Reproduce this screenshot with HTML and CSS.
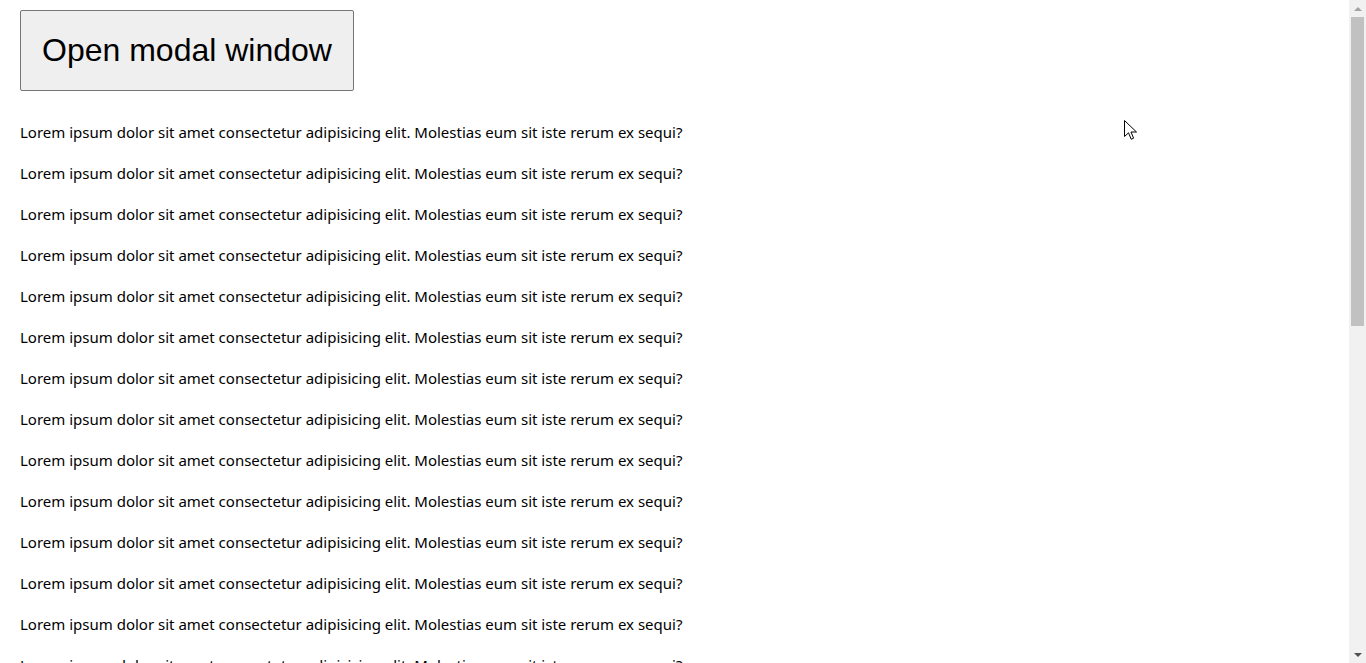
FILE: index.html
```html
<!DOCTYPE html>
<html lang="en">
<head>
<meta charset="utf-8">
<title>Modal window</title>
<link rel="stylesheet" href="styles.css">
</head>
<body>
<div class="viewport">
  <main class="page">
    <button class="btn-open" type="button">Open modal window</button>
    <p>Lorem ipsum dolor sit amet consectetur adipisicing elit. Molestias eum sit iste rerum ex sequi?</p>
    <p>Lorem ipsum dolor sit amet consectetur adipisicing elit. Molestias eum sit iste rerum ex sequi?</p>
    <p>Lorem ipsum dolor sit amet consectetur adipisicing elit. Molestias eum sit iste rerum ex sequi?</p>
    <p>Lorem ipsum dolor sit amet consectetur adipisicing elit. Molestias eum sit iste rerum ex sequi?</p>
    <p>Lorem ipsum dolor sit amet consectetur adipisicing elit. Molestias eum sit iste rerum ex sequi?</p>
    <p>Lorem ipsum dolor sit amet consectetur adipisicing elit. Molestias eum sit iste rerum ex sequi?</p>
    <p>Lorem ipsum dolor sit amet consectetur adipisicing elit. Molestias eum sit iste rerum ex sequi?</p>
    <p>Lorem ipsum dolor sit amet consectetur adipisicing elit. Molestias eum sit iste rerum ex sequi?</p>
    <p>Lorem ipsum dolor sit amet consectetur adipisicing elit. Molestias eum sit iste rerum ex sequi?</p>
    <p>Lorem ipsum dolor sit amet consectetur adipisicing elit. Molestias eum sit iste rerum ex sequi?</p>
    <p>Lorem ipsum dolor sit amet consectetur adipisicing elit. Molestias eum sit iste rerum ex sequi?</p>
    <p>Lorem ipsum dolor sit amet consectetur adipisicing elit. Molestias eum sit iste rerum ex sequi?</p>
    <p>Lorem ipsum dolor sit amet consectetur adipisicing elit. Molestias eum sit iste rerum ex sequi?</p>
    <p>Lorem ipsum dolor sit amet consectetur adipisicing elit. Molestias eum sit iste rerum ex sequi?</p>
    <p>Lorem ipsum dolor sit amet consectetur adipisicing elit. Molestias eum sit iste rerum ex sequi?</p>
    <p>Lorem ipsum dolor sit amet consectetur adipisicing elit. Molestias eum sit iste rerum ex sequi?</p>
    <svg class="cursor" width="14" height="22" viewBox="0 0 14 22" aria-hidden="true">
      <path d="M0.5 0.5 L0.5 16.5 L4.5 12.8 L7.2 19.2 L9.6 18.2 L7 12 L12.5 12 Z" fill="#fff" stroke="#000" stroke-width="1" stroke-linejoin="miter"/>
    </svg>
  </main>
  <div class="scrollbar" aria-hidden="true">
    <div class="sb-arrow sb-up"></div>
    <div class="sb-track"><div class="sb-thumb"></div></div>
    <div class="sb-arrow sb-down"></div>
  </div>
</div>
</body>
</html>
```

FILE: styles.css
```css
html, body {
  margin: 0;
  padding: 0;
  height: 100%;
  overflow: hidden;
  background: #fff;
}

.viewport {
  display: flex;
  height: 100vh;
}

.page {
  position: relative;
  flex: 1;
  overflow: hidden;
  padding: 10px 20px 0;
  font-family: "Noto Sans", "Open Sans", sans-serif;
  font-size: 15px;
  color: #000;
}

.btn-open {
  display: block;
  margin: 0 0 31px;
  padding: 21px 21px;
  font-family: "Liberation Sans", Arial, sans-serif;
  font-size: 32px;
  line-height: 37px;
  color: #000;
  background: #efefef;
  border: 1px solid #767676;
  border-radius: 2px;
}

.page p {
  margin: 0 0 20px;
  height: 21px;
  line-height: 21px;
  white-space: nowrap;
}

.cursor {
  position: absolute;
  left: 1124px;
  top: 120px;
}

.scrollbar {
  width: 17px;
  flex: none;
  display: flex;
  flex-direction: column;
  background: #f1f1f1;
}

.sb-arrow {
  height: 17px;
  flex: none;
  display: flex;
  align-items: center;
  justify-content: center;
}

.sb-up::before,
.sb-down::before {
  content: "";
  width: 0;
  height: 0;
  border-left: 4px solid transparent;
  border-right: 4px solid transparent;
}

.sb-up::before {
  border-bottom: 4px solid #a3a3a3;
}

.sb-down::before {
  border-top: 4px solid #505050;
}

.sb-track {
  flex: 1;
  padding: 0 2px;
}

.sb-thumb {
  height: 309px;
  background: #c1c1c1;
}
```
